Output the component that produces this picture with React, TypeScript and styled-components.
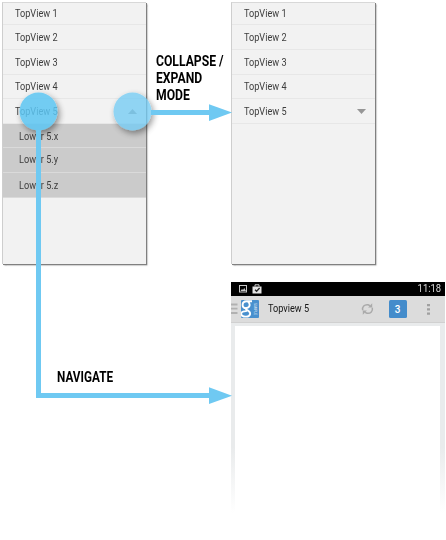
import React from 'react';
import styled, { createGlobalStyle } from 'styled-components';

const GlobalStyle = createGlobalStyle`
  * { box-sizing: border-box; }
  body { margin: 0; background: #fff; font-family: Roboto, "Liberation Sans", sans-serif; }
`;

const Page = styled.main`
  position: relative;
  width: 446px;
  height: 540px;
  overflow: hidden;
  display: grid;
  grid-template-rows: 282px 258px;
`;

const MenuRow = styled.section`
  display: grid;
  grid-template-columns: 144px 85px 144px;
  padding: 2px 0 0 2px;
`;

const Drawer = styled.ul`
  list-style: none;
  margin: 0;
  padding: 0;
  height: 262px;
  background: #f2f2f2;
  border-top: 1px solid #d8d8d8;
  border-left: 1px solid #cecece;
  box-shadow: 1px 1px 0 #808080, 1.5px 1.5px 1.5px #777;
`;

const Item = styled.li<{ $height: number; $lower?: boolean; $drop?: number }>`
  display: flex;
  align-items: center;
  justify-content: space-between;
  height: ${(p) => p.$height}px;
  padding: ${(p) => p.$drop ?? 0}px 9px 0 ${(p) => (p.$lower ? 16 : 11.8)}px;
  border-bottom: 1px solid ${(p) => (p.$lower ? '#dadada' : '#e7e7e7')};
  background: ${(p) => (p.$lower ? '#cbcbcb' : 'transparent')};
  color: #3d3d3d;
  font-size: 10.4px;
  line-height: 12px;
  white-space: nowrap;
`;

const Label = styled.span`
  display: inline-block;
  transform: scaleX(0.88);
  transform-origin: 0 50%;
`;

const Triangle = styled.svg`
  width: 9px;
  height: 5px;
  fill: #969696;
`;

const Caption = styled.p<{ $x: number; $y: number; $scale: number }>`
  margin: ${(p) => p.$y}px 0 0 ${(p) => p.$x}px;
  font-size: 14px;
  font-weight: 700;
  line-height: 17px;
  color: #000;
  white-space: pre;
  transform: scaleX(${(p) => p.$scale});
  transform-origin: 0 0;
`;

const PhoneRow = styled.section`
  display: grid;
  grid-template-columns: 231px 214px;
`;

const Phone = styled.div`
  display: flex;
  flex-direction: column;
  height: 231px;
  background: linear-gradient(#e9ebec 0, #e9ebec 165px, #fff 231px);
`;

const StatusBar = styled.div`
  display: flex;
  align-items: center;
  gap: 5px;
  height: 14px;
  padding: 0 4px 0 8px;
  background: #000;
  color: #ddd;
  font-size: 10.5px;
  line-height: 14px;
`;

const Clock = styled.span`
  margin-left: auto;
  transform: scaleX(0.9);
  transform-origin: 100% 50%;
`;

const ActionBar = styled.div`
  display: flex;
  align-items: center;
  height: 27px;
  background: #dcdcdc;
  border-bottom: 1px solid #d0d0d0;
`;

const Title = styled.div`
  width: 93px;
  margin-left: 8.5px;
  font-size: 10.4px;
  line-height: 12px;
  color: #161616;
`;

const Badge = styled.span`
  width: 18px;
  height: 18px;
  margin-left: 15px;
  border-radius: 1.5px;
  background: #448ccb;
  color: #fff;
  font-size: 10px;
  font-weight: 500;
  line-height: 19px;
  text-align: center;
`;

const Sheet = styled.div`
  flex: 1;
  margin: 3px 5px 0 4px;
  background: #fff;
`;

const Icon = styled.svg<{ $gap?: number }>`
  display: block;
  flex: none;
  margin-left: ${(p) => p.$gap ?? 0}px;
`;

const Flow = styled.svg`
  position: absolute;
  inset: 0;
  width: 446px;
  height: 540px;
  pointer-events: none;
`;

const tops = [
  { n: 1, h: 22, drop: 0 },
  { n: 2, h: 25, drop: 2 },
  { n: 3, h: 25, drop: 1 },
  { n: 4, h: 24, drop: 1 },
  { n: 5, h: 25, drop: 1 },
];

const lowers = [
  { name: 'x', h: 24, drop: 3 },
  { name: 'y', h: 25, drop: 0 },
  { name: 'z', h: 25, drop: 2 },
];

function Menu({ expanded = false }: { expanded?: boolean }) {
  return (
    <Drawer>
      {tops.map((t) => (
        <Item key={t.n} $height={t.h} $drop={t.drop}>
          <Label>TopView {t.n}</Label>
          {t.n === 5 && (
            <Triangle viewBox="0 0 9 5">
              <path d={expanded ? 'M0 5 4.5 0 9 5Z' : 'M0 0H9L4.5 5Z'} />
            </Triangle>
          )}
        </Item>
      ))}
      {expanded &&
        lowers.map((l) => (
          <Item key={l.name} $height={l.h} $drop={l.drop} $lower>
            <Label>Lower 5.{l.name}</Label>
          </Item>
        ))}
    </Drawer>
  );
}

export default function App() {
  return (
    <Page>
      <GlobalStyle />
      <MenuRow>
        <Menu expanded />
        <Caption $x={9.5} $y={51} $scale={0.87}>{'COLLAPSE /\nEXPAND\nMODE'}</Caption>
        <Menu />
      </MenuRow>
      <PhoneRow>
        <Caption $x={57} $y={87} $scale={0.84}>NAVIGATE</Caption>
        <Phone>
          <StatusBar>
            <Icon width="8" height="8" viewBox="0 0 8 8">
              <rect x=".5" y=".5" width="7" height="6.5" fill="none" stroke="#c8c8c8" />
              <path d="M1.5 6 3 4l1 1 1.3-2L7 6Z" fill="#c8c8c8" />
            </Icon>
            <Icon width="10" height="10" viewBox="0 0 10 10">
              <path d="M.5 2.5h9V9.5h-9Z" fill="#e4e4e4" />
              <path d="M3 2.5V.8h4v1.7" fill="none" stroke="#d0d0d0" />
              <path d="m3 5.7 1.6 1.6L7.6 4" fill="none" stroke="#222" strokeWidth="1.3" />
            </Icon>
            <Clock>11:18</Clock>
          </StatusBar>
          <ActionBar>
            <Icon width="7" height="12" viewBox="0 0 7 12">
              <path d="M0 1.5h6.5M0 5.7h6.5M0 10h6.5" stroke="#b1b1b1" strokeWidth="1.8" />
            </Icon>
            <Icon $gap={3} width="18" height="18" viewBox="0 0 18 18">
              <rect width="18" height="18" rx="1" fill="#4990ce" />
              <path
                d="M11 1.3H5.8C3 1.3 1.6 3 1.6 5s1.6 3.2 3.6 3.2M7 1.8c2.5 1.8 2.2 5.7-1.3 6.2-1.5.5-.8 1.6.5 2.2 4.6 2.3 3.3 6.2-1 6.4-3.5.2-5-1.3-5-2.8 0-1.7 2-2.9 5.6-2.7"
                fill="none"
                stroke="#fff"
                strokeWidth="1.9"
              />
              <text
                transform="translate(12.8 3) rotate(90)"
                fontSize="3.8"
                fill="#e6f0f8"
                textLength="12"
                lengthAdjust="spacingAndGlyphs"
              >
                SAMPLE
              </text>
            </Icon>
            <Title>
              <Label>Topview 5</Label>
            </Title>
            <Icon width="13" height="12" viewBox="0 0 13 12">
              <path
                d="M1.7 7.2C.9 4 3.4 1.2 7 1.7l2 .9M11.3 4.8c.8 3.2-1.7 6-5.3 5.5l-2-.9"
                fill="none"
                stroke="#aaa"
                strokeWidth="1.5"
              />
              <path d="M11.2.3v4.1H7.1ZM1.8 11.7V7.6h4.1Z" fill="#aaa" />
            </Icon>
            <Badge>3</Badge>
            <Icon $gap={20} width="3" height="11" viewBox="0 0 3 11">
              <path d="M0 0h3v2.2H0ZM0 4.3h3v2.2H0ZM0 8.6h3v2.2H0Z" fill="#a0a0a0" />
            </Icon>
          </ActionBar>
          <Sheet />
        </Phone>
      </PhoneRow>
      <Flow viewBox="0 0 446 540">
        <defs>
          <filter id="soft" x="-50%" y="-50%" width="200%" height="200%">
            <feDropShadow dx="2" dy="3" stdDeviation="3" floodColor="#000" floodOpacity=".5" />
          </filter>
        </defs>
        <circle cx="38.5" cy="111.5" r="19" fill="#5cc6f3" opacity=".85" filter="url(#soft)" />
        <circle cx="132.5" cy="111.5" r="19" fill="#74ccf4" opacity=".78" filter="url(#soft)" />
        <path d="M38.5 130V395.5H210" fill="none" stroke="#6fc9f2" strokeWidth="5" />
        <path d="M209 387.3 232 395.7 209 404Z" fill="#6fc9f2" />
        <path d="M151 112.5H210" fill="none" stroke="#6fc9f2" strokeWidth="5" />
        <path d="M209 104.2 232 112.5 209 121Z" fill="#6fc9f2" />
      </Flow>
    </Page>
  );
}
